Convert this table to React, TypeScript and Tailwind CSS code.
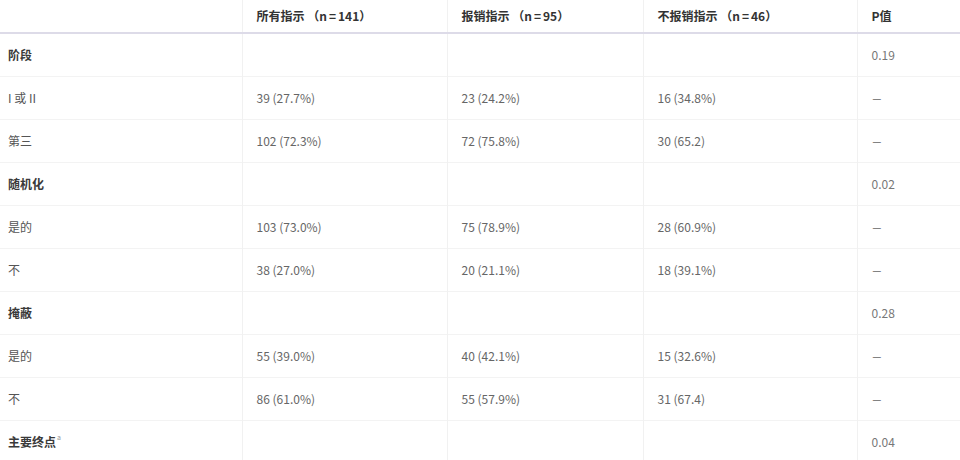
type Row = {
  label: string;
  group?: boolean;
  sup?: string;
  cells: [string, string, string];
  p: string;
};

const ROWS: Row[] = [
  { label: "阶段", group: true, cells: ["", "", ""], p: "0.19" },
  { label: "I 或 II", cells: ["39 (27.7%)", "23 (24.2%)", "16 (34.8%)"], p: "–" },
  { label: "第三", cells: ["102 (72.3%)", "72 (75.8%)", "30 (65.2)"], p: "–" },
  { label: "随机化", group: true, cells: ["", "", ""], p: "0.02" },
  { label: "是的", cells: ["103 (73.0%)", "75 (78.9%)", "28 (60.9%)"], p: "–" },
  { label: "不", cells: ["38 (27.0%)", "20 (21.1%)", "18 (39.1%)"], p: "–" },
  { label: "掩蔽", group: true, cells: ["", "", ""], p: "0.28" },
  { label: "是的", cells: ["55 (39.0%)", "40 (42.1%)", "15 (32.6%)"], p: "–" },
  { label: "不", cells: ["86 (61.0%)", "55 (57.9%)", "31 (67.4)"], p: "–" },
  { label: "主要终点", group: true, sup: "a", cells: ["", "", ""], p: "0.04" },
];

const HEADERS = [
  { title: "所有指示", n: "141" },
  { title: "报销指示", n: "95" },
  { title: "不报销指示", n: "46" },
];

export default function App() {
  return (
    <div className="h-[460px] w-[960px] overflow-hidden bg-white font-['Noto_Sans_CJK_SC','Noto_Sans',sans-serif] text-[12px]">
      <table className="w-full table-fixed border-collapse">
        <colgroup>
          <col className="w-[242px]" />
          <col className="w-[205px]" />
          <col className="w-[196px]" />
          <col className="w-[214px]" />
          <col />
        </colgroup>
        <thead>
          <tr className="h-[33px] border-b-2 border-[#dddbe8]">
            <th className="border-r border-[#f1f1f1]" />
            {HEADERS.map((h) => (
              <th
                key={h.title}
                className="border-r border-[#f1f1f1] pl-[14px] text-left font-bold text-[#333]"
              >
                {h.title} （n<span className="px-[2px]">=</span>{h.n}）
              </th>
            ))}
            <th className="pl-[14px] text-left font-bold text-[#333]">P值</th>
          </tr>
        </thead>
        <tbody>
          {ROWS.map((r, i) => (
            <tr key={i} className="h-[43px] border-b border-[#f3f3f3]">
              <td
                className={
                  "border-r border-[#f1f1f1] pl-[8px] " +
                  (r.group ? "font-bold text-[#3a3a3a]" : "text-[#555]")
                }
              >
                {r.label}
                {r.sup && (
                  <span className="relative -top-[7px] ml-[1px] text-[7px] font-normal text-[#999]">
                    {r.sup}
                  </span>
                )}
              </td>
              {r.cells.map((c, j) => (
                <td key={j} className="border-r border-[#f1f1f1] pl-[14px] text-[#666]">
                  {c}
                </td>
              ))}
              <td className="pl-[14px] text-[#777]">
                {r.p === "–" ? (
                  <span className="inline-block origin-left scale-x-150 text-[#666]">–</span>
                ) : (
                  r.p
                )}
              </td>
            </tr>
          ))}
        </tbody>
      </table>
    </div>
  );
}
